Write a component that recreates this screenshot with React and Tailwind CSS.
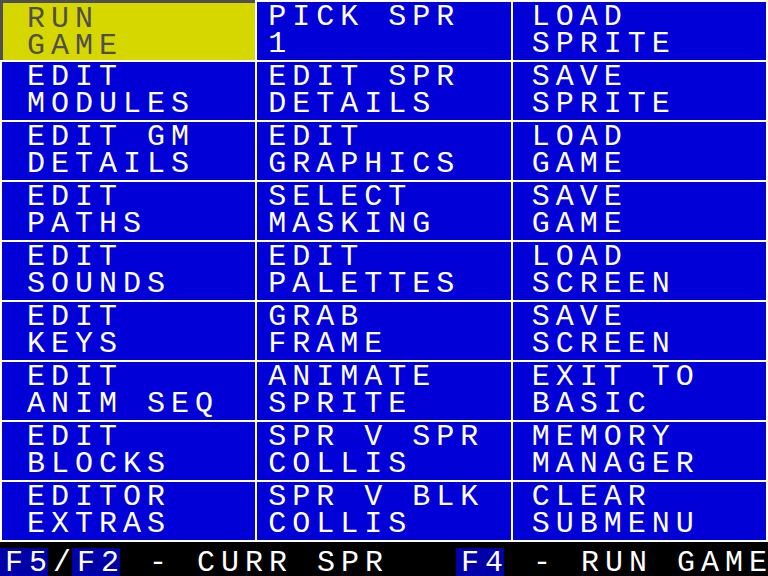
import React from 'react';

// Main editor menu: 9 rows x 3 columns of two-line options
const MENU = [
    [['RUN', 'GAME'], ['PICK SPR', '1'], ['LOAD', 'SPRITE']],
    [['EDIT', 'MODULES'], ['EDIT SPR', 'DETAILS'], ['SAVE', 'SPRITE']],
    [['EDIT GM', 'DETAILS'], ['EDIT', 'GRAPHICS'], ['LOAD', 'GAME']],
    [['EDIT', 'PATHS'], ['SELECT', 'MASKING'], ['SAVE', 'GAME']],
    [['EDIT', 'SOUNDS'], ['EDIT', 'PALETTES'], ['LOAD', 'SCREEN']],
    [['EDIT', 'KEYS'], ['GRAB', 'FRAME'], ['SAVE', 'SCREEN']],
    [['EDIT', 'ANIM SEQ'], ['ANIMATE', 'SPRITE'], ['EXIT TO', 'BASIC']],
    [['EDIT', 'BLOCKS'], ['SPR V SPR', 'COLLIS'], ['MEMORY', 'MANAGER']],
    [['EDITOR', 'EXTRAS'], ['SPR V BLK', 'COLLIS'], ['CLEAR', 'SUBMENU']],
];

// text sits on the 24px character grid, so each column has its own inset
const COL_PAD = ['pl-[25px]', 'pl-[11px]', 'pl-[19px]'];

function MenuCell({ lines, col, selected }) {
    if (selected) {
        return (
            <div className="-ml-[2px] -mt-[2px] border-l-[3px] border-t-[3px] border-[#4f4f4f] bg-[#d7d700] pl-[24px] pt-[3px] text-[#4f4f4f]">
                {lines.map((l) => (
                    <div key={l} className="whitespace-pre">{l}</div>
                ))}
            </div>
        );
    }
    return (
        <div className={`bg-[#0000d7] pt-[2px] text-white ${COL_PAD[col]}`}>
            {lines.map((l) => (
                <div key={l} className="whitespace-pre">{l}</div>
            ))}
        </div>
    );
}

// one run of the hint line, sized in whole 24px character cells
function Chunk({ text, w, hl }) {
    return (
        <span className={`flex h-[28px] shrink-0 whitespace-pre pl-[5px] pt-[2px] ${w} ${hl ? 'bg-[#0000a8]' : ''}`}>
            <span className="-mr-[6px]">{text}</span>
        </span>
    );
}

export default function App() {
    return (
        <div className="h-[576px] w-[768px] overflow-hidden bg-black font-['Liberation_Mono','Courier_New',monospace] text-[30px] leading-[27px] tracking-[6px]">
            <div className="grid grid-cols-3 grid-rows-[repeat(9,58px)] gap-[2px] bg-white p-[2px]">
                {MENU.map((row, r) =>
                    row.map((lines, c) => (
                        <MenuCell key={`${r}-${c}`} lines={lines} col={c} selected={r === 0 && c === 0} />
                    ))
                )}
            </div>

            {/* key hints */}
            <div className="flex h-[34px] items-end text-white">
                <Chunk text="F5" w="w-[48px]" hl />
                <Chunk text="/" w="w-[24px]" />
                <Chunk text="F2" w="w-[48px]" hl />
                <Chunk text=" - CURR SPR" w="w-[336px]" />
                <Chunk text="F4" w="w-[48px]" hl />
                <Chunk text=" - RUN GAME" w="w-[264px]" />
            </div>
        </div>
    );
}
